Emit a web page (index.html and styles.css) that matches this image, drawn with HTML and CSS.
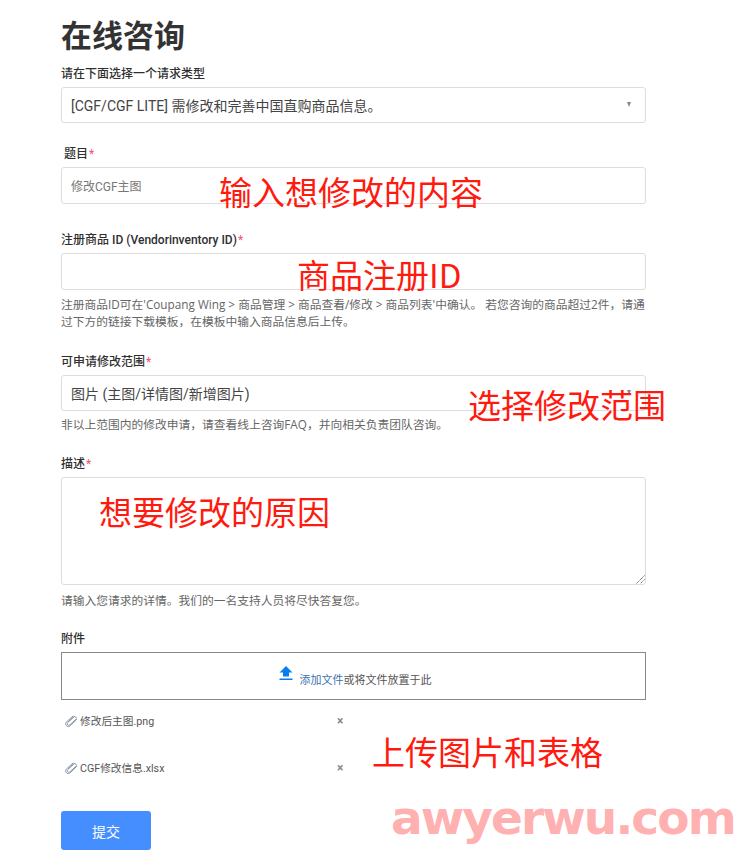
FILE: index.html
```html
<!DOCTYPE html>
<html lang="zh">
<head>
<meta charset="utf-8">
<title>在线咨询</title>
<link rel="stylesheet" href="styles.css">
</head>
<body>
<main class="page">
  <h1 class="title">在线咨询</h1>
  <form class="form">
    <div class="field field-type">
      <div class="label">请在下面选择一个请求类型</div>
      <div class="control select">[CGF/CGF LITE] 需修改和完善中国直购商品信息。<span class="caret"></span></div>
    </div>
    <div class="field field-subject">
      <div class="label label-indent">题目<span class="req">*</span></div>
      <div class="control input-box placeholder">修改CGF主图</div>
    </div>
    <div class="field field-id">
      <div class="label">注册商品 ID (Vendorinventory ID)<span class="req">*</span></div>
      <div class="control input-box"></div>
      <p class="hint">注册商品ID可在'Coupang Wing &gt; 商品管理 &gt; 商品查看/修改 &gt; 商品列表'中确认。 若您咨询的商品超过2件，请通过下方的链接下载模板，在模板中输入商品信息后上传。</p>
    </div>
    <div class="field field-scope">
      <div class="label">可申请修改范围<span class="req">*</span></div>
      <div class="control select">图片 (主图/详情图/新增图片)<span class="caret"></span></div>
      <p class="hint">非以上范围内的修改申请，请查看线上咨询FAQ，并向相关负责团队咨询。</p>
    </div>
    <div class="field field-desc">
      <div class="label">描述<span class="req">*</span></div>
      <div class="control textarea">
        <svg class="grip" viewBox="0 0 10 10" width="10" height="10"><path d="M9.5 1.5 1.5 9.5M9.5 5.5 5.5 9.5" stroke="#555" stroke-width="1" fill="none" stroke-dasharray="1.2 .6"/></svg>
      </div>
      <p class="hint">请输入您请求的详情。我们的一名支持人员将尽快答复您。</p>
    </div>
    <div class="field field-attach">
      <div class="label">附件</div>
      <div class="upload">
        <svg class="upload-icon" viewBox="0 0 14 15" width="14" height="15"><path d="M7 0 13.5 6.5H10V10.5H4V6.5H.5Z M.5 12.5H13.5V14H.5Z" fill="#0a7cf0"/></svg>
        <span class="upload-text"><span class="link">添加文件</span>或将文件放置于此</span>
      </div>
      <ul class="files">
        <li class="file">
          <svg class="clip" viewBox="0 0 12 12" width="12" height="12"><path d="M9.8 1.2 2.6 7.6a1.6 1.6 0 0 0 2.2 2.3l6-5.6M8.2 .9 1.5 6.9a2.6 2.6 0 0 0 3.6 3.9L11 5.2a2 2 0 0 0-2.8-3L3 7" stroke="#8d98ab" stroke-width="1" fill="none"/></svg>
          <span class="file-name">修改后主图.png</span><span class="remove">×</span>
        </li>
        <li class="file">
          <svg class="clip" viewBox="0 0 12 12" width="12" height="12"><path d="M9.8 1.2 2.6 7.6a1.6 1.6 0 0 0 2.2 2.3l6-5.6M8.2 .9 1.5 6.9a2.6 2.6 0 0 0 3.6 3.9L11 5.2a2 2 0 0 0-2.8-3L3 7" stroke="#8d98ab" stroke-width="1" fill="none"/></svg>
          <span class="file-name">CGF修改信息.xlsx</span><span class="remove">×</span>
        </li>
      </ul>
    </div>
    <button class="submit" type="button">提交</button>
  </form>
  <span class="note note-1">输入想修改的内容</span>
  <span class="note note-2">商品注册ID</span>
  <span class="note note-3">选择修改范围</span>
  <span class="note note-4">想要修改的原因</span>
  <span class="note note-5">上传图片和表格</span>
  <span class="watermark">awyerwu.com</span>
</main>
</body>
</html>
```
FILE: styles.css
```css
* { box-sizing: border-box; }
html, body { margin: 0; padding: 0; background: #fff; }
body {
  font-family: Roboto, "Noto Sans CJK SC", sans-serif;
  color: #2f2f2f;
  height: 855px;
  overflow: hidden;
}
.page { position: relative; width: 752px; height: 855px; padding: 18px 106px 0 61px; }
.title { margin: 0; font-size: 31px; line-height: 38px; font-weight: 700; color: #333; }
.form { display: flex; flex-direction: column; }
.label { font-size: 12px; line-height: 16px; font-weight: 500; color: #2f2f2f; }
.label-indent { padding-left: 3px; }
.req { color: #f0506e; font-weight: 400; margin-left: 1px; }
.control { border: 1px solid #ddd; border-radius: 3px; background: #fff; font-size: 14px; color: #444; }
.select { position: relative; height: 36px; margin-top: 5px; padding: 0 9px; display: flex; align-items: center; }
.input-box { height: 37px; margin-top: 5px; padding: 0 9px; display: flex; align-items: center; }
.placeholder { font-size: 12px; color: #777; }
.caret { position: absolute; right: 14px; top: 14px; width: 0; height: 0; border-left: 2.5px solid transparent; border-right: 2.5px solid transparent; border-top: 5px solid #888; }
.textarea { position: relative; height: 108px; margin-top: 5px; }
.grip { position: absolute; right: 0; bottom: 0; }
.hint { margin: 5px 0 0; font-family: "Open Sans", "Noto Sans CJK SC", sans-serif; font-size: 11.75px; line-height: 17px; color: #666; }
.field-id .hint { margin-top: 6px; }
.field-desc .hint { margin-top: 7px; }
.field-type { margin-top: 10px; }
.field-subject { margin-top: 23px; }
.field-id { margin-top: 28px; }
.field-scope { margin-top: 24px; }
.field-desc { margin-top: 23px; }
.field-attach { margin-top: 22px; }
.upload { height: 48px; margin-top: 5px; border: 1px solid #888; display: flex; justify-content: center; align-items: flex-end; padding: 0 0 11px 3px; gap: 7px; }
.upload-icon { margin-bottom: 7px; }
.upload-text { font-size: 11px; line-height: 15px; color: #555; }
.link { color: #3b73b0; }
.files { list-style: none; margin: 0; padding: 12px 0 0 4px; display: flex; flex-direction: column; gap: 30px; }
.file { display: flex; align-items: center; height: 17px; font-size: 10.7px; color: #555; gap: 3px; }
.file-name { width: 254px; }
.remove { color: #888; font-size: 12px; line-height: 12px; font-weight: 700; }
.submit { align-self: flex-start; width: 90px; height: 39px; margin-top: 35px; border: 0; border-radius: 3px; background: #448eff; color: #fff; font: 14px Roboto, "Noto Sans CJK SC", sans-serif; }
.note { position: absolute; color: #ff1a10; font-size: 33px; line-height: 40px; white-space: nowrap; font-family: "Noto Sans CJK SC", sans-serif; }
.note-1 { left: 219px; top: 171px; }
.note-2 { left: 297px; top: 254px; }
.note-3 { left: 468px; top: 384px; }
.note-4 { left: 99px; top: 491px; }
.note-5 { left: 372px; top: 731px; }
.watermark { position: absolute; left: 391px; top: 791px; font-family: "DejaVu Sans", sans-serif; font-weight: 700; font-size: 47px; line-height: 54px; letter-spacing: -1.9px; color: #ffb0b0; white-space: nowrap; }
```
